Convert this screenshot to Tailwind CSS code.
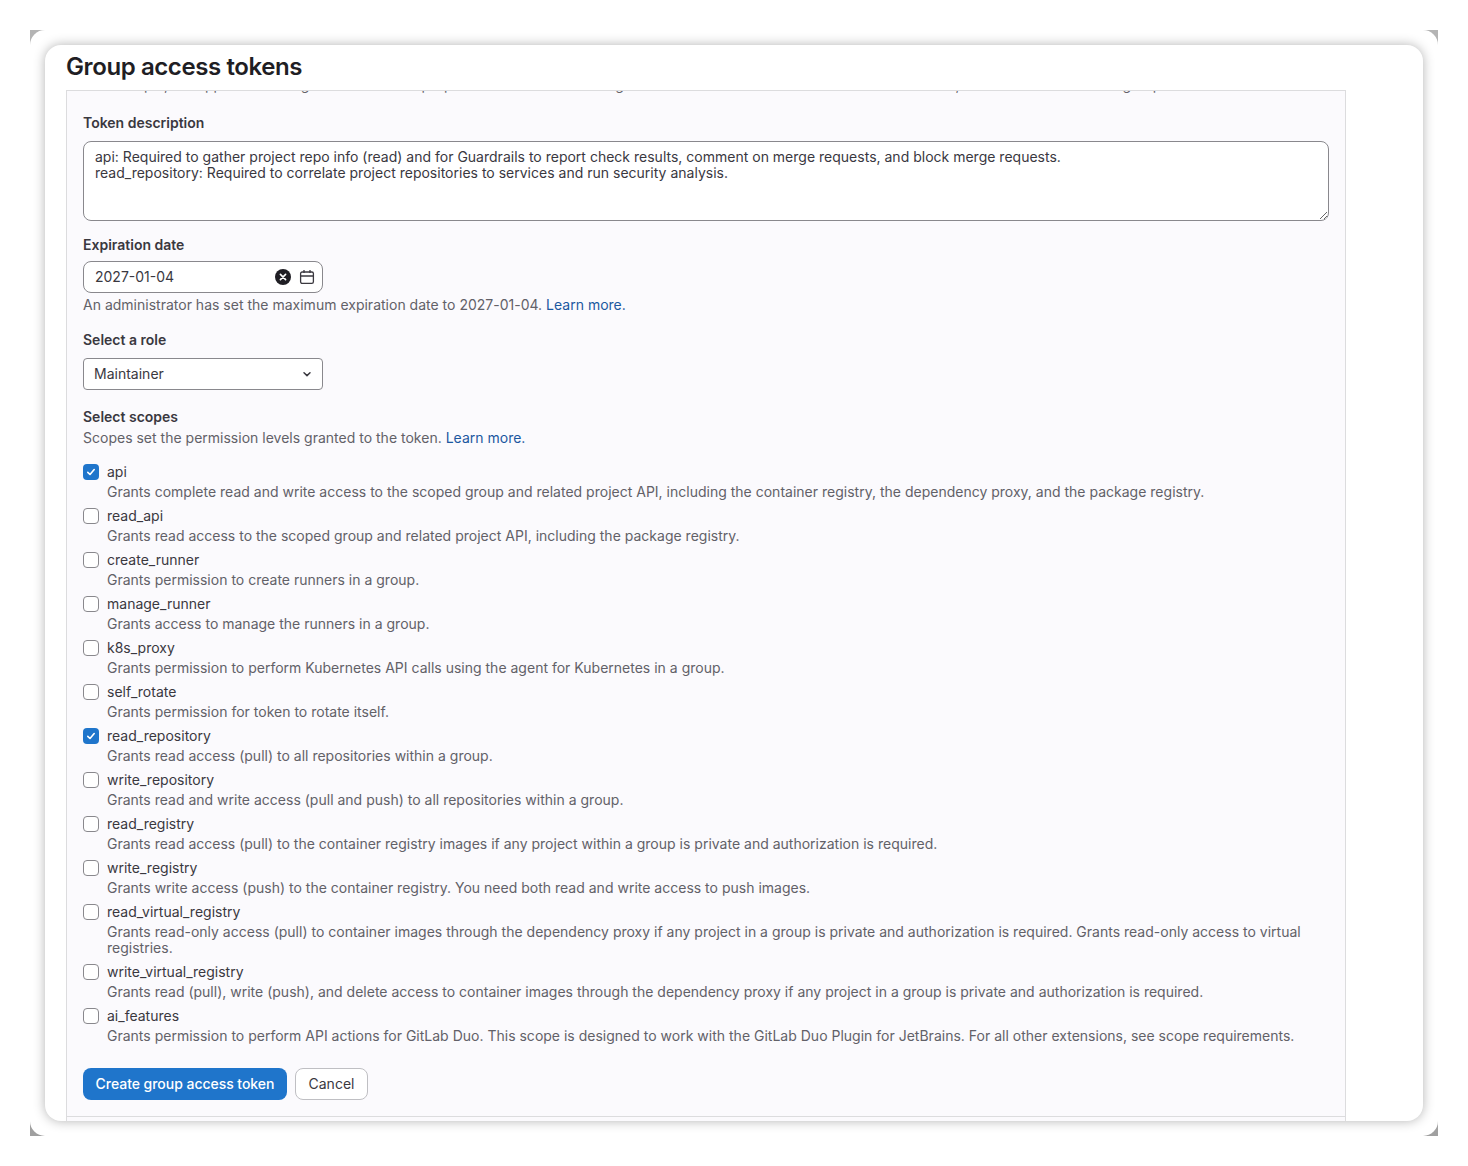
<!DOCTYPE html>
<html lang="en">
<head>
    <meta charset="UTF-8">
    <title>Group access tokens</title>
    <script src="https://cdn.jsdelivr.net/npm/@tailwindcss/browser@4"></script>
</head>
<body class="bg-white font-['Inter',sans-serif] text-[14px] leading-[20px] tracking-[0.006px] text-[#3a383f]">
    <div class="h-[1166px] w-[1468px] p-[30px]">
        <!-- gray corners behind the rounded frame -->
        <div class="h-[1106px] w-[1408px] bg-gradient-to-b from-[#b4b4b4] to-[#a0a0a0]">
            <div class="h-full w-full rounded-[15px] bg-white p-[15px]">
                <div class="h-[1076px] w-[1378px] overflow-hidden rounded-[16px] bg-white px-[21px] shadow-[0_0_12px_rgba(0,0,0,0.3)]">
                    <h1 class="h-[45px] pt-[10px] text-[24px] leading-[24px] font-semibold tracking-[-0.4px] text-[#1f1e24]">Group access tokens</h1>

                    <div class="h-[1031px] w-[1280px] overflow-hidden border-x border-t border-[#dcdcde] bg-[#fbfafd] px-4">
                        <p class="-mt-[12px] h-[12px] whitespace-nowrap leading-[12px] text-[#626168]">For example, the application using the token or the purpose of the token. Do not give sensitive information for the name of the token, as it will be visible to all group members.</p>

                        <label class="mt-[22px] block font-semibold tracking-normal">Token description</label>
                        <textarea class="mt-[8px] block h-[80px] w-[1246px] rounded-[8px] border border-[#89888d] bg-white px-[11px] py-[7px] leading-[16px] text-[#3a383f]">api: Required to gather project repo info (read) and for Guardrails to report check results, comment on merge requests, and block merge requests.
read_repository: Required to correlate project repositories to services and run security analysis.</textarea>

                        <label class="mt-[14px] block font-semibold tracking-normal">Expiration date</label>
                        <div class="mt-[6px] flex h-[32px] w-[240px] items-center rounded-[8px] border border-[#89888d] bg-white pr-[7px] pl-[11px]">
                            <span class="flex-1 tracking-normal">2027-01-04</span>
                            <svg class="h-4 w-4" viewBox="0 0 16 16"><circle cx="8" cy="8" r="8" fill="#1f1e24"/><path d="M5.4 5.4l5.2 5.2M10.6 5.4l-5.2 5.2" stroke="#fff" stroke-width="1.6" stroke-linecap="round"/></svg>
                            <svg class="ml-[8px] h-4 w-4" viewBox="0 0 16 16" fill="none" stroke="#3a383f" stroke-width="1.3"><rect x="1.6" y="3" width="12.8" height="11.4" rx="1.6"/><path d="M1.6 7h12.8M5 1v3M11 1v3"/></svg>
                        </div>
                        <p class="mt-[2px] text-[#626168]">An administrator has set the maximum expiration date to 2027-01-04. <a class="text-[#1c58a0]">Learn more.</a></p>

                        <label class="mt-[15px] block font-semibold tracking-normal">Select a role</label>
                        <div class="mt-[8px] flex h-[32px] w-[240px] items-center justify-between rounded-[4px] border border-[#89888d] bg-white pr-[9px] pl-[10px]">
                            <span>Maintainer</span>
                            <svg class="h-3 w-3" viewBox="0 0 12 12" fill="none" stroke="#3a383f" stroke-width="1.5" stroke-linecap="round" stroke-linejoin="round"><path d="M3 4.8L6 7.6l3-2.8"/></svg>
                        </div>

                        <label class="mt-[17px] block font-semibold tracking-normal">Select scopes</label>
                        <p class="mt-[1px] text-[#626168]">Scopes set the permission levels granted to the token. <a class="text-[#1c58a0]">Learn more.</a></p>

                        <!-- scope list -->
                        <div class="mt-[14px] flex flex-col gap-[4px]">
                            <div class="flex gap-2">
                                <span class="mt-[2px] flex h-4 w-4 shrink-0 items-center justify-center rounded-[4px] bg-[#1f75cb]"><svg class="h-3 w-3" viewBox="0 0 12 12" fill="none" stroke="#fff" stroke-width="1.6" stroke-linecap="round" stroke-linejoin="round"><path d="M2.8 6.4l2.2 2.1 4.2-5"/></svg></span>
                                <div><div>api</div><p class="text-[#626168]">Grants complete read and write access to the scoped group and related project API, including the container registry, the dependency proxy, and the package registry.</p></div>
                            </div>
                            <div class="flex gap-2">
                                <span class="mt-[2px] h-4 w-4 shrink-0 rounded-[4px] border border-[#89888d] bg-white"></span>
                                <div><div>read_api</div><p class="text-[#626168]">Grants read access to the scoped group and related project API, including the package registry.</p></div>
                            </div>
                            <div class="flex gap-2">
                                <span class="mt-[2px] h-4 w-4 shrink-0 rounded-[4px] border border-[#89888d] bg-white"></span>
                                <div><div>create_runner</div><p class="text-[#626168]">Grants permission to create runners in a group.</p></div>
                            </div>
                            <div class="flex gap-2">
                                <span class="mt-[2px] h-4 w-4 shrink-0 rounded-[4px] border border-[#89888d] bg-white"></span>
                                <div><div>manage_runner</div><p class="text-[#626168]">Grants access to manage the runners in a group.</p></div>
                            </div>
                            <div class="flex gap-2">
                                <span class="mt-[2px] h-4 w-4 shrink-0 rounded-[4px] border border-[#89888d] bg-white"></span>
                                <div><div>k8s_proxy</div><p class="text-[#626168]">Grants permission to perform Kubernetes API calls using the agent for Kubernetes in a group.</p></div>
                            </div>
                            <div class="flex gap-2">
                                <span class="mt-[2px] h-4 w-4 shrink-0 rounded-[4px] border border-[#89888d] bg-white"></span>
                                <div><div>self_rotate</div><p class="text-[#626168]">Grants permission for token to rotate itself.</p></div>
                            </div>
                            <div class="flex gap-2">
                                <span class="mt-[2px] flex h-4 w-4 shrink-0 items-center justify-center rounded-[4px] bg-[#1f75cb]"><svg class="h-3 w-3" viewBox="0 0 12 12" fill="none" stroke="#fff" stroke-width="1.6" stroke-linecap="round" stroke-linejoin="round"><path d="M2.8 6.4l2.2 2.1 4.2-5"/></svg></span>
                                <div><div>read_repository</div><p class="text-[#626168]">Grants read access (pull) to all repositories within a group.</p></div>
                            </div>
                            <div class="flex gap-2">
                                <span class="mt-[2px] h-4 w-4 shrink-0 rounded-[4px] border border-[#89888d] bg-white"></span>
                                <div><div>write_repository</div><p class="text-[#626168]">Grants read and write access (pull and push) to all repositories within a group.</p></div>
                            </div>
                            <div class="flex gap-2">
                                <span class="mt-[2px] h-4 w-4 shrink-0 rounded-[4px] border border-[#89888d] bg-white"></span>
                                <div><div>read_registry</div><p class="text-[#626168]">Grants read access (pull) to the container registry images if any project within a group is private and authorization is required.</p></div>
                            </div>
                            <div class="flex gap-2">
                                <span class="mt-[2px] h-4 w-4 shrink-0 rounded-[4px] border border-[#89888d] bg-white"></span>
                                <div><div>write_registry</div><p class="text-[#626168]">Grants write access (push) to the container registry. You need both read and write access to push images.</p></div>
                            </div>
                            <div class="flex gap-2">
                                <span class="mt-[2px] h-4 w-4 shrink-0 rounded-[4px] border border-[#89888d] bg-white"></span>
                                <div><div>read_virtual_registry</div><p class="py-[2px] leading-[16px] text-[#626168]">Grants read-only access (pull) to container images through the dependency proxy if any project in a group is private and authorization is required. Grants read-only access to virtual registries.</p></div>
                            </div>
                            <div class="flex gap-2">
                                <span class="mt-[2px] h-4 w-4 shrink-0 rounded-[4px] border border-[#89888d] bg-white"></span>
                                <div><div>write_virtual_registry</div><p class="text-[#626168]">Grants read (pull), write (push), and delete access to container images through the dependency proxy if any project in a group is private and authorization is required.</p></div>
                            </div>
                            <div class="flex gap-2">
                                <span class="mt-[2px] h-4 w-4 shrink-0 rounded-[4px] border border-[#89888d] bg-white"></span>
                                <div><div>ai_features</div><p class="text-[#626168]">Grants permission to perform API actions for GitLab Duo. This scope is designed to work with the GitLab Duo Plugin for JetBrains. For all other extensions, see scope requirements.</p></div>
                            </div>
                        </div>

                        <div class="mt-[22px] flex gap-2">
                            <button class="h-[32px] w-[204px] rounded-[8px] bg-[#1f75cb] font-medium tracking-[-0.04px] text-white">Create group access token</button>
                            <button class="h-[32px] w-[73px] rounded-[8px] border border-[#bfbfc3] bg-white text-[#3a383f]">Cancel</button>
                        </div>
                        <div class="-mx-4 mt-[16px] border-t border-[#dcdcde]"></div>
                    </div>
                </div>
            </div>
        </div>
    </div>
</body>
</html>
